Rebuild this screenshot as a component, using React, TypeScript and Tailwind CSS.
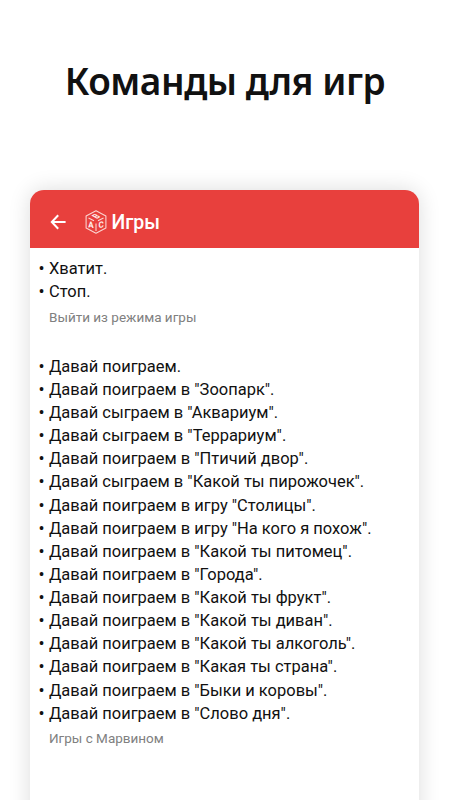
const sections = [
  {
    id: 1,
    commands: ['Хватит.', 'Стоп.'],
    desc: 'Выйти из режима игры',
  },
  {
    id: 2,
    commands: [
      'Давай поиграем.',
      'Давай поиграем в "Зоопарк".',
      'Давай сыграем в "Аквариум".',
      'Давай сыграем в "Террариум".',
      'Давай поиграем в "Птичий двор".',
      'Давай сыграем в "Какой ты пирожочек".',
      'Давай поиграем в игру "Столицы".',
      'Давай поиграем в игру "На кого я похож".',
      'Давай поиграем в "Какой ты питомец".',
      'Давай поиграем в "Города".',
      'Давай поиграем в "Какой ты фрукт".',
      'Давай поиграем в "Какой ты диван".',
      'Давай поиграем в "Какой ты алкоголь".',
      'Давай поиграем в "Какая ты страна".',
      'Давай поиграем в "Быки и коровы".',
      'Давай поиграем в "Слово дня".',
    ],
    desc: 'Игры с Марвином',
  },
];

function BackIcon() {
  return (
    <svg width="16" height="16" viewBox="0 0 16 16" fill="none" stroke="white" strokeWidth="2">
      <path d="M15.6 8H1.8M8.2 1.2L1.8 8l6.4 6.8" />
    </svg>
  );
}

// Toy block with a letter on each face
function CubeIcon() {
  return (
    <svg width="22" height="24" viewBox="0 0 22 24" fill="none" stroke="#fbd3d0" strokeWidth="1.1" strokeLinejoin="round">
      <path d="M11 .8L20.9 6V18L11 23.2L1.1 18V6Z" />
      <path d="M3.5 7.9L9 10.8M18.5 7.9L13 10.8M11 13.5V21" />
      <g fill="#fff0ef" stroke="none" fontFamily="Roboto, sans-serif" fontWeight="700" textAnchor="middle">
        <text fontSize="8.5" transform="matrix(.95 .15 0 1 5.9 17.6)">A</text>
        <text fontSize="8.5" transform="matrix(.95 -.15 0 1 16.1 17.6)">C</text>
        <text fontSize="9" transform="matrix(.75 -.4 .9 .5 13.9 7.9)">B</text>
      </g>
    </svg>
  );
}

export default function App() {
  return (
    <div className="h-[800px] w-[450px] overflow-hidden bg-white pt-[56px] font-['Roboto',sans-serif]">
      <h1 className="h-[134px] text-center font-['Noto_Sans',sans-serif] text-[37px] leading-[50px] font-semibold tracking-[-0.45px] whitespace-nowrap text-[#111]">
        Команды для игр
      </h1>

      <div className="ml-[30.4px] h-[640px] w-[389px] overflow-hidden rounded-t-[14px] bg-white shadow-[0_0_22px_rgba(0,0,0,0.14)]">
        <header className="flex h-[58px] items-center bg-[#e8403d] pt-[5px] pl-[19.6px]">
          <BackIcon />
          <div className="ml-[19.4px]">
            <CubeIcon />
          </div>
          <h2 className="mt-[3px] ml-[4px] text-[19.5px] leading-6 font-medium text-white">Игры</h2>
        </header>

        <main className="pt-[9px] pl-[8px]">
          {sections.map((section) => (
            <section key={section.id} className="mb-[28px]">
              <ul>
                {section.commands.map((command) => (
                  <li key={command} className="flex h-[23.13px] items-center text-[16.48px] leading-[23px] whitespace-nowrap text-[#111]">
                    <span className="w-[10.6px] text-[18px]">•</span>
                    <span>{command}</span>
                  </li>
                ))}
              </ul>
              <p className="mt-[3.5px] ml-[10.6px] text-[13.5px] leading-[20px] text-[#808080]">{section.desc}</p>
            </section>
          ))}
        </main>
      </div>
    </div>
  );
}
